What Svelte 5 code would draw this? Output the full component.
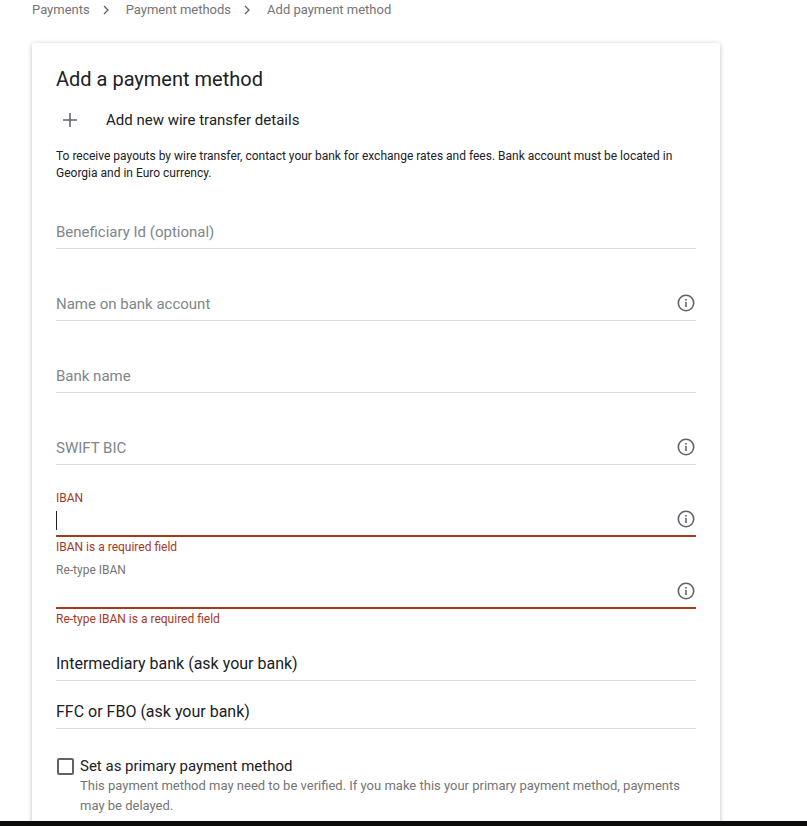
<script lang="ts">
	const crumbs = ['Payments', 'Payment methods', 'Add payment method'];

	const fields = [
		{ label: 'Beneficiary Id (optional)', info: false },
		{ label: 'Name on bank account', info: true },
		{ label: 'Bank name', info: false },
		{ label: 'SWIFT BIC', info: true },
	];

	const errorFields = [
		{ label: 'IBAN', error: 'IBAN is a required field', focused: true },
		{ label: 'Re-type IBAN', error: 'Re-type IBAN is a required field', focused: false },
	];

	const filled = ['Intermediary bank (ask your bank)', 'FFC or FBO (ask your bank)'];
</script>

{#snippet info()}
	<svg class="info" width="20" height="20" viewBox="0 0 20 20" aria-hidden="true">
		<circle cx="10" cy="10" r="7.7" fill="none" stroke="#5f6368" stroke-width="1.6" />
		<rect x="9.2" y="9" width="1.6" height="5" fill="#5f6368" />
		<rect x="9.2" y="6" width="1.6" height="1.7" fill="#5f6368" />
	</svg>
{/snippet}

<div class="page">
	<div class="main">
		<nav class="crumbs">
			{#each crumbs as c, i}
				{#if i > 0}
					<svg class="sep" width="6" height="10" viewBox="0 0 6 10" aria-hidden="true">
						<path d="M1 1l4 4-4 4" fill="none" stroke="#5f6368" stroke-width="1.3" />
					</svg>
				{/if}
				<span>{c}</span>
			{/each}
		</nav>

		<div class="card">
			<h1>Add a payment method</h1>

			<div class="add-row">
				<svg width="16" height="16" viewBox="0 0 16 16" aria-hidden="true">
					<path d="M8 1v14M1 8h14" fill="none" stroke="#5f6368" stroke-width="1.5" />
				</svg>
				<span>Add new wire transfer details</span>
			</div>

			<p class="note">
				To receive payouts by wire transfer, contact your bank for exchange rates and fees. Bank account must be located in Georgia and in Euro currency.
			</p>

			<div class="plain-fields">
				{#each fields as f}
					<div class="field">
						<span class="placeholder">{f.label}</span>
						{#if f.info}{@render info()}{/if}
					</div>
				{/each}
			</div>

			<div class="err-fields">
				{#each errorFields as f}
					<div class="err-field">
						<span class="float" class:red={f.focused}>{f.label}</span>
						<div class="err-input">
							{#if f.focused}<span class="caret"></span>{/if}
							{@render info()}
						</div>
						<span class="err-msg">{f.error}</span>
					</div>
				{/each}
			</div>

			<div class="filled-fields">
				{#each filled as label}
					<div class="field filled"><span>{label}</span></div>
				{/each}
			</div>

			<div class="primary">
				<span class="box"></span>
				<div>
					<div class="primary-label">Set as primary payment method</div>
					<div class="primary-hint">
						This payment method may need to be verified. If you make this your primary payment method, payments may be delayed.
					</div>
				</div>
			</div>
		</div>
	</div>
	<div class="taskbar"></div>
</div>

<style>
:global(body) { margin:0; background:#fff; }
.page { height:826px; display:flex; flex-direction:column; overflow:hidden; font-family:Roboto, "Liberation Sans", sans-serif; color:#202124; }
.main { flex:1; min-height:0; overflow:hidden; padding:0 87px 0 32px; }
.taskbar { height:5px; background:#0d0c08; }

.crumbs { height:19px; display:flex; align-items:center; font-size:13px; color:#757575; }
.sep { margin:0 17px 0 13px; }

.card { margin-top:24px; padding:24px; background:#fff; box-shadow:0 1px 5px rgba(0,0,0,.25); border-radius:2px; }
h1 { margin:0; font-size:20px; font-weight:400; line-height:24px; }

.add-row { display:flex; align-items:center; margin-top:17px; height:24px; font-size:15px; }
.add-row svg { margin:0 28px 0 6px; }
.note { margin:16px 0 0; font-size:12px; line-height:17px; }

.plain-fields { display:flex; flex-direction:column; gap:24px; margin-top:19px; }
.field { box-sizing:border-box; height:48px; padding-bottom:5px; border-bottom:1px solid #dadce0; display:flex; align-items:flex-end; justify-content:space-between; font-size:15px; line-height:22px; }
.placeholder { color:#80868b; }
.info { flex:none; margin-bottom:2px; }

.err-fields { display:flex; flex-direction:column; gap:7px; margin-top:25px; }
.err-field { display:flex; flex-direction:column; font-size:12px; line-height:16px; }
.float { color:#757575; }
.float.red { color:#a5391f; }
.err-input { position:relative; box-sizing:border-box; height:31px; border-bottom:2px solid #a5391f; display:flex; align-items:flex-end; justify-content:flex-end; }
.err-input .info { margin-bottom:6px; }
.caret { position:absolute; left:0; top:5px; width:1px; height:19px; background:#202124; }
.err-msg { margin-top:2px; color:#a5391f; }

.filled-fields { margin-top:6px; }
.field.filled { font-size:16px; }

.primary { display:flex; gap:6px; margin-top:27px; }
.box { flex:none; box-sizing:border-box; width:17px; height:17px; margin:2px 0 0 1px; border:2px solid #5f6368; border-radius:2px; }
.primary-label { font-size:15px; line-height:20px; }
.primary-hint { font-size:13px; line-height:20px; color:#757575; }
</style>
